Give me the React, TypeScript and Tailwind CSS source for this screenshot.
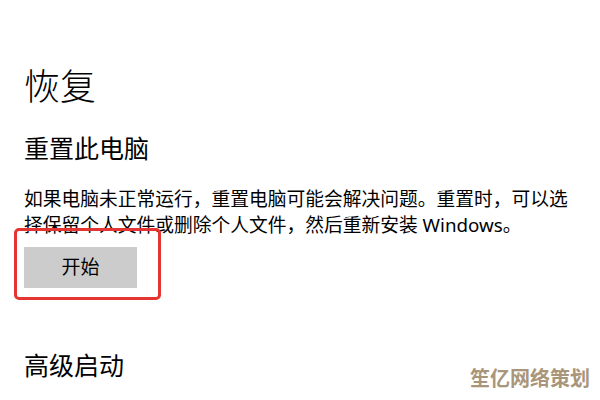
import React from 'react';

const font = "[font-family:'Noto_Sans','Noto_Sans_CJK_SC',sans-serif]";

const App: React.FC = () => {
    return (
        <div className={`relative w-[600px] h-[400px] overflow-hidden bg-white text-black ${font}`}>
            <div className="pl-6 pt-[60px]">
                <h1 className="text-[36px] leading-[54px] font-light">恢复</h1>

                <h2 className="mt-[16px] text-[25px] leading-[36px]">重置此电脑</h2>

                <p className="mt-[20px] w-[552px] text-[18.75px] leading-[26px]">
                    如果电脑未正常运行，重置电脑可能会解决问题。重置时，可以选择保留个人文件或删除个人文件，然后重新安装 Windows。
                </p>

                {/* button with red highlight box */}
                <div className="relative mt-[9px] w-[113px]">
                    <button className="w-[113px] h-[41px] bg-[#cccccc] text-[19px] leading-none">开始</button>
                    <div className="absolute left-[-10px] top-[-19px] right-[-24px] bottom-[-12px] border-[3px] border-[#e53532] rounded-[5px]" />
                </div>

                <h2 className="mt-[59px] text-[25px] leading-[36px]">高级启动</h2>
            </div>

            {/* watermark */}
            <div className="absolute right-[10px] bottom-[6px] text-[20px] font-bold text-[#a08a6c] opacity-90">
                笙亿网络策划
            </div>
        </div>
    );
};

export default App;
